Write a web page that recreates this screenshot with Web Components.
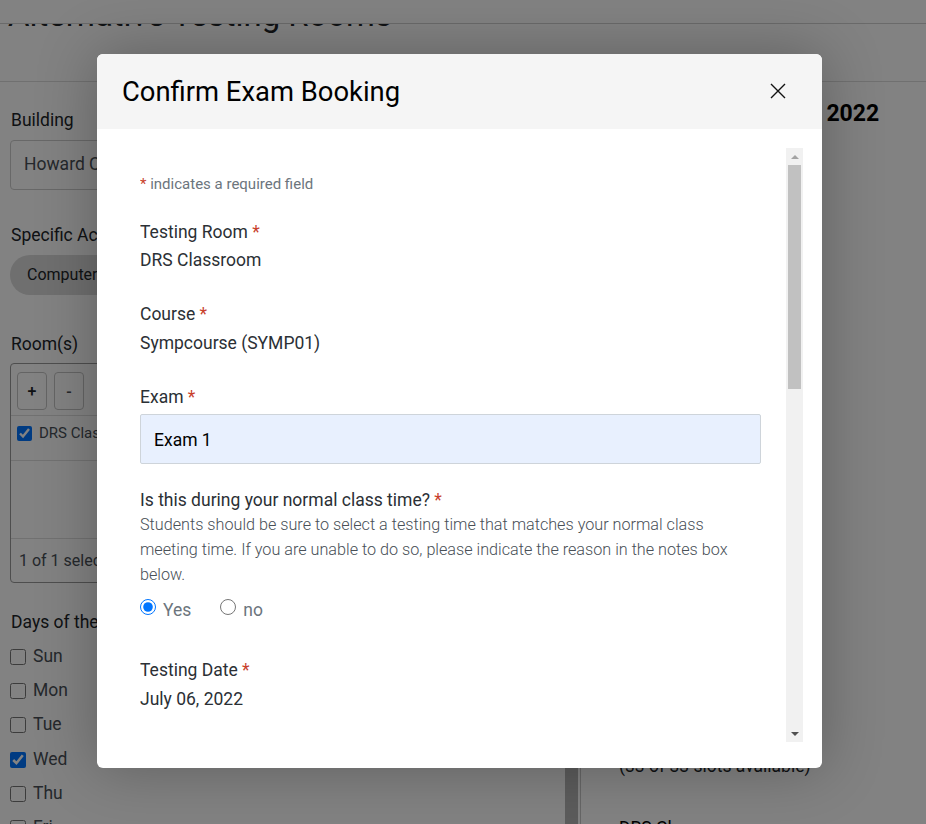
<!DOCTYPE html>
<html lang="en"><head><meta charset="utf-8"><title>Confirm Exam Booking</title><style>
html,body{margin:0;padding:0;height:824px;overflow:hidden;background:#fff;font-family:Roboto,"Liberation Sans",sans-serif}
</style></head><body>
<bg-page></bg-page>
<modal-overlay>
  <exam-modal heading="Confirm Exam Booking">
    <form-note></form-note>
    <static-field label="Testing Room" value="DRS Classroom"></static-field>
    <static-field label="Course" value="Sympcourse (SYMP01)"></static-field>
    <select-field label="Exam" value="Exam 1"></select-field>
    <radio-field label="Is this during your normal class time?" help="Students should be sure to select a testing time that matches your normal class meeting time. If you are unable to do so, please indicate the reason in the notes box below."></radio-field>
    <static-field label="Testing Date" value="July 06, 2022"></static-field>
  </exam-modal>
</modal-overlay>
<script>
const def=(name,html)=>customElements.define(name,class extends HTMLElement{
  constructor(){super();this.attachShadow({mode:'open'});}
  connectedCallback(){this.shadowRoot.innerHTML=typeof html==='function'?html(this):html;}
});
const labelCss=`.lab{font-size:17.5px;line-height:27px;color:#2b3035;display:block}
.star{color:#c8402c}`;
def('bg-page',`<style>
:host{display:block;position:absolute;inset:0;z-index:0;overflow:hidden;background:#fff;color:#212529;font-size:17.5px;line-height:27px}
.top{position:absolute;left:0;right:0;top:0;height:23px;background:#fff;border-bottom:1px solid #d0d0d0;z-index:1}
.head{height:82px;box-sizing:border-box;border-bottom:1px solid #dcdcdc;padding-left:8px;overflow:hidden}
h1{margin:-5px 0 0;font-weight:400;font-size:32.9px;line-height:40px;white-space:nowrap}
.cols{display:flex;height:742px}
.left{width:565px;flex:none;box-sizing:border-box;padding:25px 0 0 10px}
.lbl{padding-left:1px}
.sel{height:50px;box-sizing:border-box;border:1px solid #ccc;border-radius:4px;margin:6px 20px 32px 0;padding:0 13px 1px;display:flex;align-items:center;color:#495057;width:535px}
.pill{height:40px;width:160px;border-radius:20px;background:#d9d9d9;margin:6px 0 36px;padding:0 0 2px 17px;box-sizing:border-box;display:flex;align-items:center;font-size:16px}
.box{width:535px;height:220px;box-sizing:border-box;border:1px solid #999;border-radius:4px;margin:5px 0 26px;display:flex;flex-direction:column}
.tools{height:52px;flex:none;box-sizing:border-box;border-bottom:1px solid #ddd;padding:8px 6px;display:flex;gap:7px}
.btn{width:30px;height:38px;box-sizing:border-box;border:1px solid #c4c4c4;border-radius:4px;display:flex;align-items:center;justify-content:center;font-size:16px;font-weight:500;color:#212529}
.btn+.btn{color:#495057}
.row{height:45px;flex:none;box-sizing:border-box;border-bottom:1px solid #ddd;padding:0 6px 10px;display:flex;align-items:center;gap:7px;font-size:15px;color:#495057}
.row input{margin:0;width:15px;height:15px}
.mid{flex:1}
.foot{height:44px;flex:none;box-sizing:border-box;border-top:1px solid #ddd;padding:0 8px;display:flex;align-items:center;font-size:16px;color:#495057}
.days{display:flex;flex-direction:column;margin-top:3px}
.day{height:34.3px;display:flex;align-items:center;gap:7px;color:#495057}
.day input{margin:1px 0 0;width:16px;height:16px}
.sep{width:13px;flex:none;background:#b4b4b4}
.right{flex:1;margin-left:2px;border-left:1px solid #c8c8c8;padding-left:38px;overflow:hidden;white-space:nowrap}
h2{margin:17px 0 0 120.5px;font-size:23px;line-height:29px;font-weight:700;color:#000;white-space:nowrap}
.slots{margin-top:625px;color:#212529}
.rm{margin-top:35px;color:#000}
</style>
<div class="top"></div>
<div class="head"><h1>Alternative Testing Rooms</h1></div>
<div class="cols">
  <div class="left">
    <div class="lbl">Building</div>
    <div class="sel">Howard C</div>
    <div class="lbl">Specific Accommodations</div>
    <div class="pill">Computer</div>
    <div class="lbl">Room(s)</div>
    <div class="box">
      <div class="tools"><span class="btn">+</span><span class="btn">-</span></div>
      <div class="row"><input type="checkbox" checked><span>DRS Classroom</span></div>
      <div class="mid"></div>
      <div class="foot">1 of 1 selected</div>
    </div>
    <div class="lbl">Days of the Week</div>
    <div class="days">
      <label class="day"><input type="checkbox">Sun</label>
      <label class="day"><input type="checkbox">Mon</label>
      <label class="day"><input type="checkbox">Tue</label>
      <label class="day"><input type="checkbox" checked>Wed</label>
      <label class="day"><input type="checkbox">Thu</label>
      <label class="day"><input type="checkbox">Fri</label>
    </div>
  </div>
  <div class="sep"></div>
  <div class="right">
    <h2>July 06, 2022</h2>
    <div class="slots">(33 of 33 slots available)</div>
    <div class="rm">DRS Classroom</div>
  </div>
</div>`);
def('modal-overlay',`<style>
:host{display:block;position:absolute;inset:0;z-index:1;background:rgba(0,0,0,.49);box-sizing:border-box;padding:54px 0 0 97px}
</style><slot></slot>`);
def('exam-modal',h=>`<style>
:host{display:flex;flex-direction:column;width:725px;height:714px;background:#fff;border-radius:6px;overflow:hidden;box-shadow:0 0 60px rgba(0,0,0,.28);font-family:Roboto,"Liberation Sans",sans-serif}
.hd{height:75px;flex:none;background:#f5f5f5;display:flex;align-items:center;justify-content:space-between;padding:0 36px 0 25px;box-sizing:border-box}
h2{margin:2px 0 0;font-size:27.4px;line-height:73px;font-weight:400;color:#000}
svg{display:block;margin-bottom:2px}
.bd{flex:1;min-height:0;display:flex;padding:19px 19px 26px 43px;gap:25px}
.scroll{flex:1;min-width:0;overflow:hidden}
</style>
<div class="hd"><h2>${h.getAttribute('heading')}</h2>
<svg width="16" height="16" viewBox="0 0 16 16" aria-label="Close"><path d="M1 1 15 15M15 1 1 15" stroke="#111" stroke-width="1.4" fill="none"/></svg></div>
<div class="bd"><div class="scroll"><slot></slot></div><fake-scrollbar></fake-scrollbar></div>`);
def('fake-scrollbar',`<style>
:host{display:flex;flex-direction:column;width:17px;flex:none;background:#f1f1f1}
.a{height:17px;flex:none;display:flex;align-items:center;justify-content:center}
.t{width:0;height:0;border-left:4px solid transparent;border-right:4px solid transparent}
.u{border-bottom:4px solid #a3a3a3}
.d{border-top:4px solid #505050}
.track{flex:1;padding:0 2px}
.thumb{height:224px;background:#c1c1c1}
</style><div class="a"><div class="t u"></div></div><div class="track"><div class="thumb"></div></div><div class="a"><div class="t d"></div></div>`);
def('form-note',`<style>
:host{display:block;padding-top:26px;margin-bottom:24.75px;font-size:15px;line-height:20px;color:#6c757d}
.star{color:#c8402c}
</style><span class="star">*</span> indicates a required field`);
def('static-field',h=>`<style>
:host{display:block;margin-bottom:27px}
${labelCss}
.val{font-size:17.5px;line-height:27px;color:#2b3035;margin-top:1.5px}
</style><span class="lab">${h.getAttribute('label')} <span class="star">*</span></span><div class="val">${h.getAttribute('value')}</div>`);
def('select-field',h=>`<style>
:host{display:block;margin-bottom:23px}
${labelCss}
.inp{height:50px;width:621px;box-sizing:border-box;margin-top:3.25px;background:#e8f0fe;border:1px solid #ced4da;border-radius:2px;padding:1px 13px 0;display:flex;align-items:center;font-size:17.5px;color:#000}
</style><span class="lab">${h.getAttribute('label')} <span class="star">*</span></span><div class="inp">${h.getAttribute('value')}</div>`);
def('radio-field',h=>`<style>
:host{display:block;margin-bottom:30px}
${labelCss}
.help{font-size:16.2px;line-height:25px;font-weight:300;color:#495057;width:621px;margin-top:-2px}
.opts{display:flex;align-items:center;height:36px;margin-top:4px;font-size:17.5px;color:#6c757d}
label{display:flex;align-items:center;gap:7px;margin-right:29px;padding-top:2px}
input{margin:0 0 7px;width:16px;height:16px}
</style><span class="lab">${h.getAttribute('label')} <span class="star">*</span></span><div class="help">${h.getAttribute('help')}</div>
<div class="opts"><label><input type="radio" name="n" checked>Yes</label><label><input type="radio" name="n">no</label></div>`);
</script>
</body></html>
